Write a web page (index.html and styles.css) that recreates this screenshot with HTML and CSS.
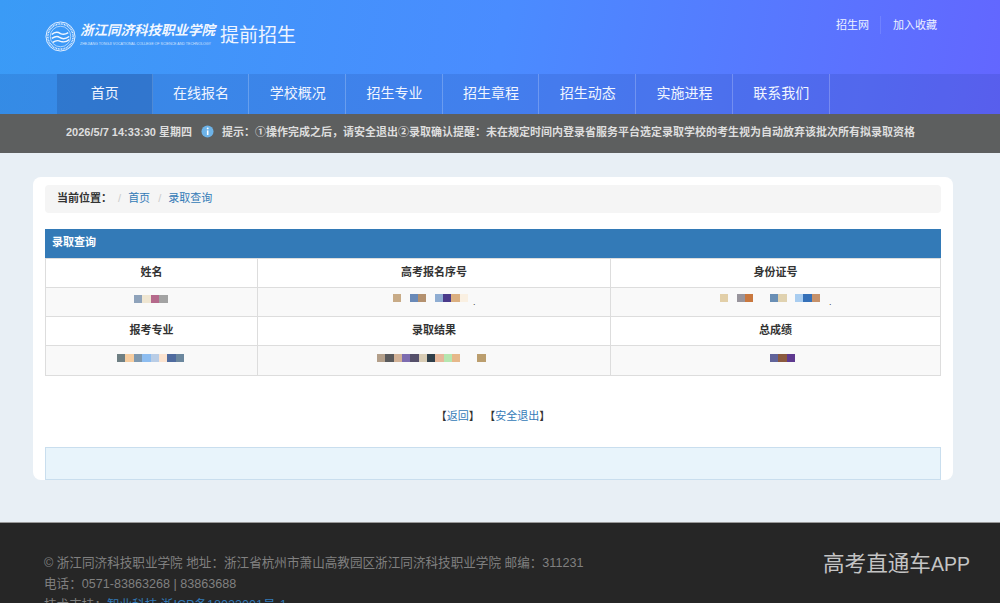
FILE: index.html
```html
<!DOCTYPE html>
<html lang="zh-CN">
<head>
    <meta charset="UTF-8">
    <meta name="viewport" content="width=device-width, initial-scale=1.0">
    <title>录取查询 - 提前招生</title>
    <link rel="stylesheet" href="styles.css">
</head>
<body>
    <header class="top">
        <div class="top-bar">
            <svg class="seal" viewBox="0 0 32 32" aria-hidden="true">
                <circle cx="16" cy="16" r="15" fill="none" stroke="#e8f2ff" stroke-width="1"/>
                <circle cx="16" cy="16" r="13" fill="none" stroke="#e8f2ff" stroke-width="1.6" stroke-dasharray="1 .7"/>
                <circle cx="16" cy="16" r="10.6" fill="none" stroke="#e8f2ff" stroke-width=".7"/>
                <path d="M7 14c3-3 6-3 9-1 2 1 5 1 8-1M7 18c3-2 6-3 8-1 3 2 6 2 10-1M8 22c3-2 6-2 8-1 3 1 6 1 9-2" fill="none" stroke="#f2f7ff" stroke-width="1.5"/>
            </svg>
            <div class="school">
                <div class="school-cn">浙江同济科技职业学院</div>
                <div class="school-en">ZHEJIANG TONGJI VOCATIONAL COLLEGE OF SCIENCE AND TECHNOLOGY</div>
            </div>
            <div class="site-title">提前招生</div>
            <div class="top-links">
                <a href="#">招生网</a>
                <a href="#">加入收藏</a>
            </div>
        </div>
        <nav class="nav">
            <a class="active" href="#">首页</a>
            <a href="#">在线报名</a>
            <a href="#">学校概况</a>
            <a href="#">招生专业</a>
            <a href="#">招生章程</a>
            <a href="#">招生动态</a>
            <a href="#">实施进程</a>
            <a href="#">联系我们</a>
        </nav>
    </header>

    <div class="notice">
        <span class="clock">2026/5/7 14:33:30 星期四</span>
        <svg class="info" viewBox="0 0 14 14" aria-hidden="true">
            <circle cx="7" cy="7" r="6.5" fill="#6db3e8"/>
            <circle cx="7.2" cy="3.7" r="1" fill="#fff"/>
            <path d="M7.2 5.8v5" stroke="#fff" stroke-width="1.7"/>
        </svg>
        <span>提示：①操作完成之后，请安全退出②录取确认提醒：未在规定时间内登录省服务平台选定录取学校的考生视为自动放弃该批次所有拟录取资格</span>
    </div>

    <main class="main">
        <div class="card">
            <div class="crumb">
                <strong>当前位置：</strong>
                <span class="sep">/</span><a href="#">首页</a>
                <span class="sep">/</span><a href="#">录取查询</a>
            </div>

            <div class="panel-title">录取查询</div>
            <table class="grid">
                <tr>
                    <th class="col-a">姓名</th>
                    <th class="col-b">高考报名序号</th>
                    <th>身份证号</th>
                </tr>
                <tr class="data">
                    <td><span class="mosaic m-name"></span></td>
                    <td><span class="mosaic m-seq"></span><span class="dot dot-seq">.</span></td>
                    <td><span class="mosaic m-id"></span><span class="dot dot-id">.</span></td>
                </tr>
                <tr>
                    <th>报考专业</th>
                    <th>录取结果</th>
                    <th>总成绩</th>
                </tr>
                <tr class="data last">
                    <td><span class="mosaic m-major"></span></td>
                    <td><span class="mosaic m-result"></span></td>
                    <td><span class="mosaic m-score"></span></td>
                </tr>
            </table>

            <div class="actions">
                <span>【<a href="#">返回</a>】</span>
                <span>【<a href="#">安全退出</a>】</span>
            </div>

            <div class="tip-box"></div>
        </div>
    </main>

    <footer class="footer">
        <div class="footer-text">
            <p>© 浙江同济科技职业学院 地址：浙江省杭州市萧山高教园区浙江同济科技职业学院 邮编：311231</p>
            <p>电话：0571-83863268 | 83863688</p>
            <p>技术支持：<a href="#">智业科技 浙ICP备18023001号-1</a></p>
        </div>
        <div class="app">高考直通车<span class="app-latin">APP</span></div>
    </footer>
</body>
</html>
```

FILE: styles.css
```css
* { box-sizing: border-box; }
html, body { margin: 0; padding: 0; }
body { font-family: "Liberation Sans", "Noto Sans CJK SC", sans-serif; font-size: 12px; color: #333; background-color: #e8eff5; overflow: hidden; }
a { color: #337ab7; text-decoration: none; }
p { margin: 0; }

.top { background: linear-gradient(100deg, #3a9bf6 0%, #4a8cff 50%, #6366ff 100%); }
.top-bar { height: 74px; display: flex; align-items: flex-start; padding: 21px 63px 0 45px; }
.seal { width: 31px; height: 31px; }
.school { width: 136px; margin-left: 4px; color: #f2f7ff; }
.school-cn { font-size: 13.5px; line-height: 20px; font-weight: bold; font-style: italic; white-space: nowrap; }
.school-en { font-size: 3.6px; line-height: 6px; white-space: nowrap; opacity: .8; }
.site-title { margin-left: 4px; font-size: 19px; line-height: 30px; color: #eef4ff; }
.top-links { margin-left: auto; margin-top: -5px; display: flex; font-size: 11px; line-height: 18px; }
.top-links a { color: #eef2ff; }
.top-links a + a { margin-left: 11px; padding-left: 12px; border-left: 1px solid rgba(255, 255, 255, .12); }

.nav { height: 40px; display: flex; padding-left: 57px; background-color: rgba(20, 50, 130, .14); }
.nav a { width: 96.7px; padding-left: 1px; border-right: 1px solid rgba(255, 255, 255, .22); color: #f0f5ff; font-size: 14px; line-height: 39px; text-align: center; }
.nav a.active { width: 95.7px; background-color: rgba(20, 50, 110, .2); border-right-color: rgba(255, 255, 255, .15); }

.notice { height: 39px; display: flex; align-items: center; padding: 0 0 5px 66px; background-color: #5d5f5f; color: #dedede; font-size: 11px; font-weight: bold; white-space: nowrap; }
.clock { width: 135px; }
.info { width: 13px; height: 13px; margin-right: 8px; }

.main { height: 369px; padding: 24px 47px 0 33px; }
.card { height: 303px; padding: 8px 12px 0; background-color: #fff; border-radius: 8px; overflow: hidden; }
.crumb { height: 28px; padding-left: 12px; background-color: #f5f5f5; border-radius: 4px; font-size: 11px; line-height: 26px; }
.crumb strong { color: #333; margin-right: -2px; }
.crumb .sep { color: #ccc; margin: 0 7px 0 5px; }

.panel-title { height: 29px; margin-top: 16px; padding-left: 7px; background-color: #337ab7; color: #fff; font-weight: bold; font-size: 11px; line-height: 27px; }
.grid { width: 100%; border-collapse: collapse; table-layout: fixed; }
.grid th, .grid td { height: 29px; padding: 0; border: 1px solid #ddd; text-align: center; color: #333; }
.grid th { font-size: 11px; font-weight: bold; padding-bottom: 5px; }
.grid .data td { background-color: #f9f9f9; padding-bottom: 8px; }
.grid .last td { height: 30px; padding-bottom: 7px; }
.col-a { width: 212px; }
.col-b { width: 353px; }

.mosaic { display: inline-block; height: 8px; margin-right: 2px; vertical-align: middle; }
.dot { display: inline-block; font-size: 9px; line-height: 8px; text-align: right; vertical-align: -3px; color: #444; }
.dot-seq { width: 6px; }
.dot-id { width: 10px; }
.m-name { width: 34px; background: linear-gradient(90deg, #8fa3bb 25%, #efe6d2 25% 50%, #b56a8c 50% 75%, #a3a3a3 75%); }
.m-seq { width: 75px; background: linear-gradient(90deg, #c8ab87 0 8.4px, transparent 8.4px 16.7px, #6a8ab8 16.7px 25px, #b4916f 25px 33.4px, transparent 33.4px 41.7px, #8fadd2 41.7px 50px, #4a3a8a 50px 58.4px, #dbaf80 58.4px 66.7px, #faf0e2 66.7px); }
.m-id { width: 100px; background: linear-gradient(90deg, #e2cfa8 0 8.3px, transparent 8.3px 16.7px, #98949c 16.7px 25px, #c9783f 25px 33.3px, transparent 33.3px 50px, #6a8fb5 50px 58.3px, #e0d2b0 58.3px 66.7px, transparent 66.7px 75px, #a9cdf0 75px 83.3px, #3570b8 83.3px 91.7px, #c6916a 91.7px); }
.m-major { width: 67px; background: linear-gradient(90deg, #6e7f83 12.5%, #f6cda0 12.5% 25%, #7f98ae 25% 37.5%, #8dbdf0 37.5% 50%, #b9cde6 50% 62.5%, #fbe3d0 62.5% 75%, #4f6b9f 75% 87.5%, #6b879e 87.5%); }
.m-result { width: 109px; margin-right: 6px; background: linear-gradient(90deg, #b39f8a 0 8.3px, #5a5a5c 8.3px 16.6px, #d2b297 16.6px 25px, #7d6cb0 25px 33.3px, #55506a 33.3px 41.6px, #d8ccb5 41.6px 50px, #2f3f4a 50px 58.3px, #e6b79a 58.3px 66.6px, #b5e6b0 66.6px 75px, #e6b88a 75px 83.3px, transparent 83.3px 100px, #bb9e6e 100px); }
.m-score { width: 25px; margin-left: 16px; background: linear-gradient(90deg, #62649a 33.3%, #8b5a3f 33.3% 66.6%, #5f3a90 66.6%); }

.actions { display: flex; justify-content: center; gap: 4.5px; margin-top: 31px; font-size: 11px; line-height: 18px; color: #333; }
.tip-box { height: 33px; margin-top: 22px; background-color: #e8f4fb; border: 1px solid #c9deee; }

.footer { height: 81px; display: flex; justify-content: space-between; padding: 30px 30px 0 44px; background-color: #262626; border-top: 1px solid #999; color: #808080; overflow: hidden; }
.footer-text { line-height: 21px; font-size: 12.6px; }
.footer-text a { color: #337ab7; }
.app { margin-top: -1px; color: #c4c4c4; font-size: 21.6px; line-height: 24px; }
.app-latin { font-size: 19.5px; }
```
